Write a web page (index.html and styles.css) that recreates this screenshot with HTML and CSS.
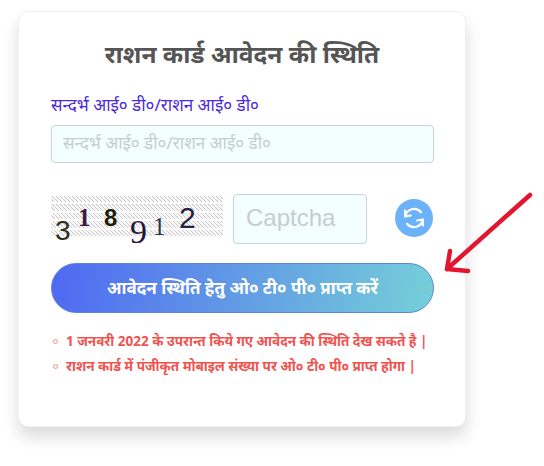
FILE: index.html
```html
<!DOCTYPE html>
<html lang="hi">
<head>
    <meta charset="UTF-8">
    <meta name="viewport" content="width=device-width, initial-scale=1.0">
    <title>राशन कार्ड आवेदन की स्थिति</title>
    <link rel="stylesheet" href="styles.css">
</head>
<body>

    <div class="card">
        <h2 class="card-title">राशन कार्ड आवेदन की स्थिति</h2>

        <label class="field-label" for="refId">सन्दर्भ आई० डी०/राशन आई० डी०</label>
        <input class="field-input" id="refId" type="text" placeholder="सन्दर्भ आई० डी०/राशन आई० डी०">

        <!-- Captcha -->
        <div class="captcha-row">
            <svg class="captcha-image" width="172" height="58" viewBox="0 0 172 58">
                <defs>
                    <pattern id="hatch" width="4" height="4" patternUnits="userSpaceOnUse">
                        <path d="M-1 -1L5 5" stroke="#c9c9c9" stroke-width="1.1"/>
                    </pattern>
                </defs>
                <rect y="1" width="172" height="6" fill="url(#hatch)"/>
                <rect y="9" width="172" height="7" fill="url(#hatch)"/>
                <rect y="18" width="172" height="6" fill="url(#hatch)"/>
                <rect y="26" width="172" height="7" fill="url(#hatch)"/>
                <rect y="35" width="172" height="6" fill="url(#hatch)"/>
                <text class="digit sans" x="4" y="45" font-size="28" fill="#2f2f22">3</text>
                <text class="digit bold" x="27" y="31" font-size="25" fill="#3b1a45">1</text>
                <text class="digit bold sans" x="53" y="31" font-size="24" fill="#1f1f0c">8</text>
                <text class="digit" x="79" y="48" font-size="34" fill="#2a1440">9</text>
                <text class="digit" x="102" y="40" font-size="25" fill="#33334d">1</text>
                <text class="digit sans" x="128" y="33" font-size="30" fill="#26223f">2</text>
            </svg>
            <input class="field-input captcha-input" type="text" placeholder="Captcha">
            <button class="refresh-button" type="button" aria-label="refresh">
                <svg width="24" height="24" viewBox="0 0 24 24" fill="none" stroke="#fff" stroke-width="2.2" stroke-linecap="round" stroke-linejoin="round">
                    <path d="M3.2 10.5A9 9 0 0 1 19 6.2"/>
                    <path d="M20.8 13.5A9 9 0 0 1 5 17.8"/>
                    <path d="M3 4.5l.2 6 5.6-1"/>
                    <path d="M21 19.5l-.2-6-5.6 1"/>
                </svg>
            </button>
        </div>

        <button class="submit-button" type="button">आवेदन स्थिति हेतु ओ० टी० पी० प्राप्त करें</button>

        <ul class="notes">
            <li>1 जनवरी 2022 के उपरान्त किये गए आवेदन की स्थिति देख सकते है |</li>
            <li>राशन कार्ड में पंजीकृत मोबाइल संख्या पर ओ० टी० पी० प्राप्त होगा |</li>
        </ul>
    </div>

    <!-- Red arrow on top of the screenshot -->
    <svg class="arrow" width="96" height="86" viewBox="0 0 96 86" fill="none" stroke="#e2162f" stroke-width="4.5" stroke-linecap="round" stroke-linejoin="round">
        <path d="M90 5L7 79"/>
        <path d="M10 61L7 79L28 81"/>
    </svg>

</body>
</html>
```

FILE: styles.css
```css
:root {
    --texto: #555;
    --azul: #4a2be0;
    --borde: #c9d3d6;
    --campo: #f3feff;
    --rojo: #ef5350;
}

body {
    font-family: "Noto Sans", "Liberation Sans", Arial, sans-serif;
    background-color: #fff;
    margin: 0;
    padding: 11px 0 0 18px;
    height: 455px;
    position: relative;
    overflow: hidden;
}

.card {
    box-sizing: border-box;
    width: 448px;
    height: 416px;
    padding: 24px 32px 0 32px;
    background-color: #fff;
    border: 1px solid #f0f0f0;
    border-radius: 10px;
    box-shadow: 0 10px 16px rgba(0, 0, 0, 0.14);
}

.card-title {
    margin: 0 0 21px;
    text-align: center;
    font-size: 24.5px;
    line-height: 36px;
    font-weight: bold;
    color: var(--texto);
}

.field-label {
    display: block;
    font-size: 17px;
    line-height: 24px;
    margin-bottom: 8px;
    color: var(--azul);
}

.field-input {
    box-sizing: border-box;
    display: block;
    width: 383px;
    height: 38px;
    padding: 0 11px 3px;
    font-family: inherit;
    font-size: 17px;
    background-color: var(--campo);
    border: 1px solid var(--borde);
    border-radius: 4px;
    outline: none;
}

.field-input::placeholder {
    color: #c5cdd0;
}

.captcha-row {
    display: flex;
    align-items: flex-start;
    height: 50px;
    margin-top: 31px;
}

.captcha-image {
    flex: none;
    margin-top: 1px;
    margin-right: 10px;
}

.digit {
    font-family: "Liberation Serif", serif;
}

.bold {
    font-weight: bold;
}

.sans {
    font-family: "Liberation Sans", sans-serif;
}

.captcha-input {
    width: 134px;
    height: 50px;
    padding: 0 12px 2px;
    font-family: "Liberation Sans", Arial, sans-serif;
    font-size: 24px;
}

.refresh-button {
    display: flex;
    align-items: center;
    justify-content: center;
    flex: none;
    width: 38px;
    height: 38px;
    padding: 0;
    margin: 5px 0 0 28px;
    border: none;
    border-radius: 50%;
    background-color: #6cb2f8;
}

.submit-button {
    display: block;
    box-sizing: border-box;
    width: 383px;
    height: 50px;
    margin-top: 19px;
    padding: 0 0 2px;
    font-family: inherit;
    font-size: 17px;
    font-weight: bold;
    color: #fff;
    border: 1px solid #5b86dd;
    border-radius: 25px;
    background: linear-gradient(100deg, #4f68f2, #75d0d8);
}

.notes {
    list-style: none;
    margin: 16px 0 0;
    padding: 0;
    font-size: 13.5px;
    line-height: 25px;
    font-weight: bold;
    color: var(--rojo);
}

.notes li {
    display: flex;
    align-items: center;
    white-space: nowrap;
}

.notes li::before {
    content: "";
    flex: none;
    box-sizing: border-box;
    width: 5px;
    height: 5px;
    margin: 0 8px 0 2px;
    border: 1px solid #f3908e;
    border-radius: 50%;
}

.arrow {
    position: absolute;
    left: 440px;
    top: 190px;
}
```
